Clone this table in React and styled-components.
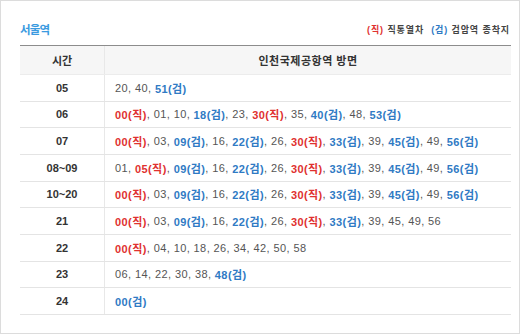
import React from 'react'
import styled, { createGlobalStyle } from 'styled-components'

const GlobalStyle = createGlobalStyle`
  html, body { margin: 0; padding: 0; background: #fff; }
  body { font-family: "Liberation Sans", "Noto Sans CJK KR", sans-serif; }
`

const rows = [
  ['05', '20, 40, 51검'],
  ['06', '00직, 01, 10, 18검, 23, 30직, 35, 40검, 48, 53검'],
  ['07', '00직, 03, 09검, 16, 22검, 26, 30직, 33검, 39, 45검, 49, 56검'],
  ['08~09', '01, 05직, 09검, 16, 22검, 26, 30직, 33검, 39, 45검, 49, 56검'],
  ['10~20', '00직, 03, 09검, 16, 22검, 26, 30직, 33검, 39, 45검, 49, 56검'],
  ['21', '00직, 03, 09검, 16, 22검, 26, 30직, 33검, 39, 45, 49, 56'],
  ['22', '00직, 04, 10, 18, 26, 34, 42, 50, 58'],
  ['23', '06, 14, 22, 30, 38, 48검'],
  ['24', '00검'],
]

export default function App() {
  return (
    <>
      <GlobalStyle />
      <Card>
        <TitleBar>
          <Title>서울역</Title>
          <Legend>
            <Mark $tone="red">(직)</Mark> 직통열차
            <Mark $tone="blue" style={{ marginLeft: 7 }}>(검)</Mark> 검암역 종착지
          </Legend>
        </TitleBar>
        <Table>
          <HeadRow>
            <TimeCell>시간</TimeCell>
            <HeadCell>인천국제공항역 방면</HeadCell>
          </HeadRow>
          {rows.map(([time, list]) => (
            <Row key={time}>
              <TimeCell>{time}</TimeCell>
              <ListCell>
                {list.split(', ').map((item, i) => {
                  const tag = item.endsWith('직') ? 'red' : item.endsWith('검') ? 'blue' : null
                  return (
                    <React.Fragment key={i}>
                      {i > 0 && ', '}
                      {tag ? (
                        <Mark $tone={tag}>{item.slice(0, -1)}({item.slice(-1)})</Mark>
                      ) : (
                        item
                      )}
                    </React.Fragment>
                  )
                })}
              </ListCell>
            </Row>
          ))}
        </Table>
      </Card>
    </>
  )
}

const Card = styled.div`
  width: 520px;
  height: 334px;
  box-sizing: border-box;
  border: 1px solid #dcdcdc;
  padding: 19px 9px 0 19px;
`

const TitleBar = styled.div`
  display: flex;
  justify-content: space-between;
  align-items: flex-end;
  height: 25px;
  box-sizing: border-box;
  padding-bottom: 10px;
`

const Title = styled.h2`
  margin: 0;
  font-size: 11.5px;
  font-weight: bold;
  color: #3a9ae0;
  letter-spacing: -0.8px;
  line-height: 1;
  transform: translateY(1px);
`

const Legend = styled.div`
  font-size: 9px;
  font-weight: bold;
  color: #444;
  letter-spacing: 0.9px;
  line-height: 1;
`

const Mark = styled.span`
  font-weight: bold;
  color: ${(p) => (p.$tone === 'red' ? '#e0312f' : '#2f7ac4')};
`

const Table = styled.div`
  width: 491px;
  border-top: 1px solid #8c8c8c;
`

const Row = styled.div`
  display: grid;
  grid-template-columns: 85px 1fr;
  height: 26.67px;
  box-sizing: border-box;
  border-bottom: 1px solid #e4e4e4;
  align-items: stretch;
`

const HeadRow = styled(Row)`
  height: 29px;
  background: #f6f6f6;
  border-bottom: 1px solid #ececec;
`

const TimeCell = styled.div`
  display: flex;
  align-items: center;
  justify-content: center;
  font-size: 11px;
  font-weight: bold;
  color: #333;
  border-right: 1px solid #e8e8e8;
`

const HeadCell = styled.div`
  display: flex;
  align-items: center;
  justify-content: center;
  font-size: 11px;
  font-weight: bold;
  color: #333;
  letter-spacing: 0.5px;
`

const ListCell = styled.div`
  display: flex;
  align-items: center;
  padding-left: 10px;
  font-size: 11px;
  letter-spacing: 0.4px;
  color: #555;
  white-space: pre;
`
